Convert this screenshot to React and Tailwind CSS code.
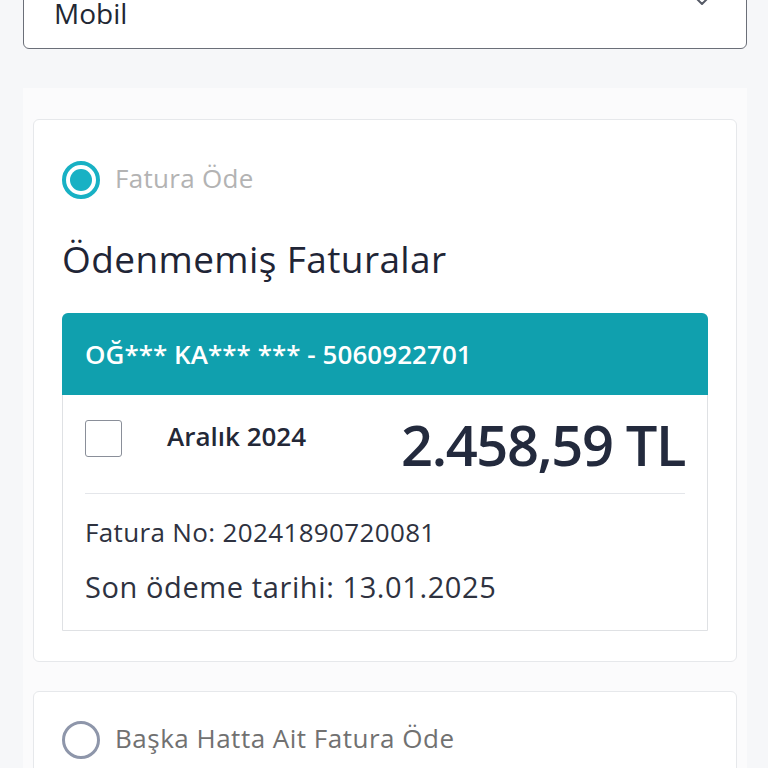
import React from "react";

function Radio({ checked }) {
  if (checked) {
    return (
      <div className="w-[38px] h-[38px] rounded-full border-[4px] border-[#18b1c4] flex items-center justify-center shrink-0">
        <div className="w-[22px] h-[22px] rounded-full bg-[#18b1c4]" />
      </div>
    );
  }
  return <div className="w-[38px] h-[38px] rounded-full border-[3px] border-[#8e96aa] shrink-0" />;
}

export default function App() {
  return (
    <div
      className="w-[768px] h-[768px] overflow-hidden bg-[#f6f7f9] pl-[23px] pr-[21px] text-[#1f2536]"
      style={{ fontFamily: "'Open Sans', Lato, sans-serif" }}
    >
      <div className="mt-[-22px] h-[71px] bg-white border border-[#6b6f78] rounded-[6px] flex justify-between pl-[30px] pr-[37px]">
        <span className="text-[28px] leading-none self-center mt-[-2px] text-[#222733]">Mobil</span>
        <svg className="mt-[18px]" width="14" height="10" viewBox="0 0 14 10" fill="none">
          <path d="M2 2 L7 7 L12 2" stroke="#555a66" strokeWidth="2" strokeLinecap="round" strokeLinejoin="round" />
        </svg>
      </div>

      <div className="mt-[39px] bg-[#fbfbfc] px-[10px] pt-[31px] pb-[40px]">
        <div className="bg-white border border-[#e6e8eb] rounded-[6px] px-[28px] pt-[41px] pb-[30px]">
          <div className="flex items-center gap-[15px]">
            <Radio checked />
            <span className="text-[26px] leading-none text-[#b3b3b3] mt-[-4px] tracking-[0.3px]">Fatura Öde</span>
          </div>
          <div className="mt-[38px] text-[37px] leading-[44px] text-[#1f2536] tracking-[0.4px]">Ödenmemiş Faturalar</div>

          <div className="mt-[32px] border border-[#dfe1e4] rounded-t-[7px] bg-white">
            <div className="h-[82px] bg-[#10a0ae] rounded-t-[6px] flex items-center pl-[23px] -mx-px -mt-px">
              <span className="text-[26px] font-semibold text-white leading-none tracking-[0.05px]">OĞ*** KA*** *** - 5060922701</span>
            </div>
            <div className="px-[22px]">
              <div className="flex items-center h-[99px] border-b border-[#e4e6ea]">
                <div className="w-[37px] h-[37px] border-[1.5px] border-[#8a8f99] rounded-[3px] self-start mt-[25px]" />
                <span className="ml-[45px] text-[26px] font-semibold text-[#232837] self-start mt-[23px] leading-[36px]">Aralık 2024</span>
                <span className="ml-auto text-[56px] font-semibold text-[#232a3d] leading-none tracking-[-1.4px]">2.458,59 TL</span>
              </div>
              <div className="pt-[22px] text-[26px] leading-[32px] text-[#2e3240] tracking-[0.35px]">Fatura No: 20241890720081</div>
              <div className="mt-[22px] pb-[26px] text-[29px] leading-[34px] text-[#2e3240] tracking-[0.6px]">Son ödeme tarihi: 13.01.2025</div>
            </div>
          </div>
        </div>

        <div className="mt-[29px] bg-white border border-[#e6e8eb] rounded-[6px] pl-[28px] pt-[29px] pb-[30px]">
          <div className="flex items-center gap-[15px]">
            <Radio />
            <span className="text-[26px] leading-none text-[#717171] mt-[-4px] tracking-[0.5px]">Başka Hatta Ait Fatura Öde</span>
          </div>
        </div>
      </div>
    </div>
  );
}
